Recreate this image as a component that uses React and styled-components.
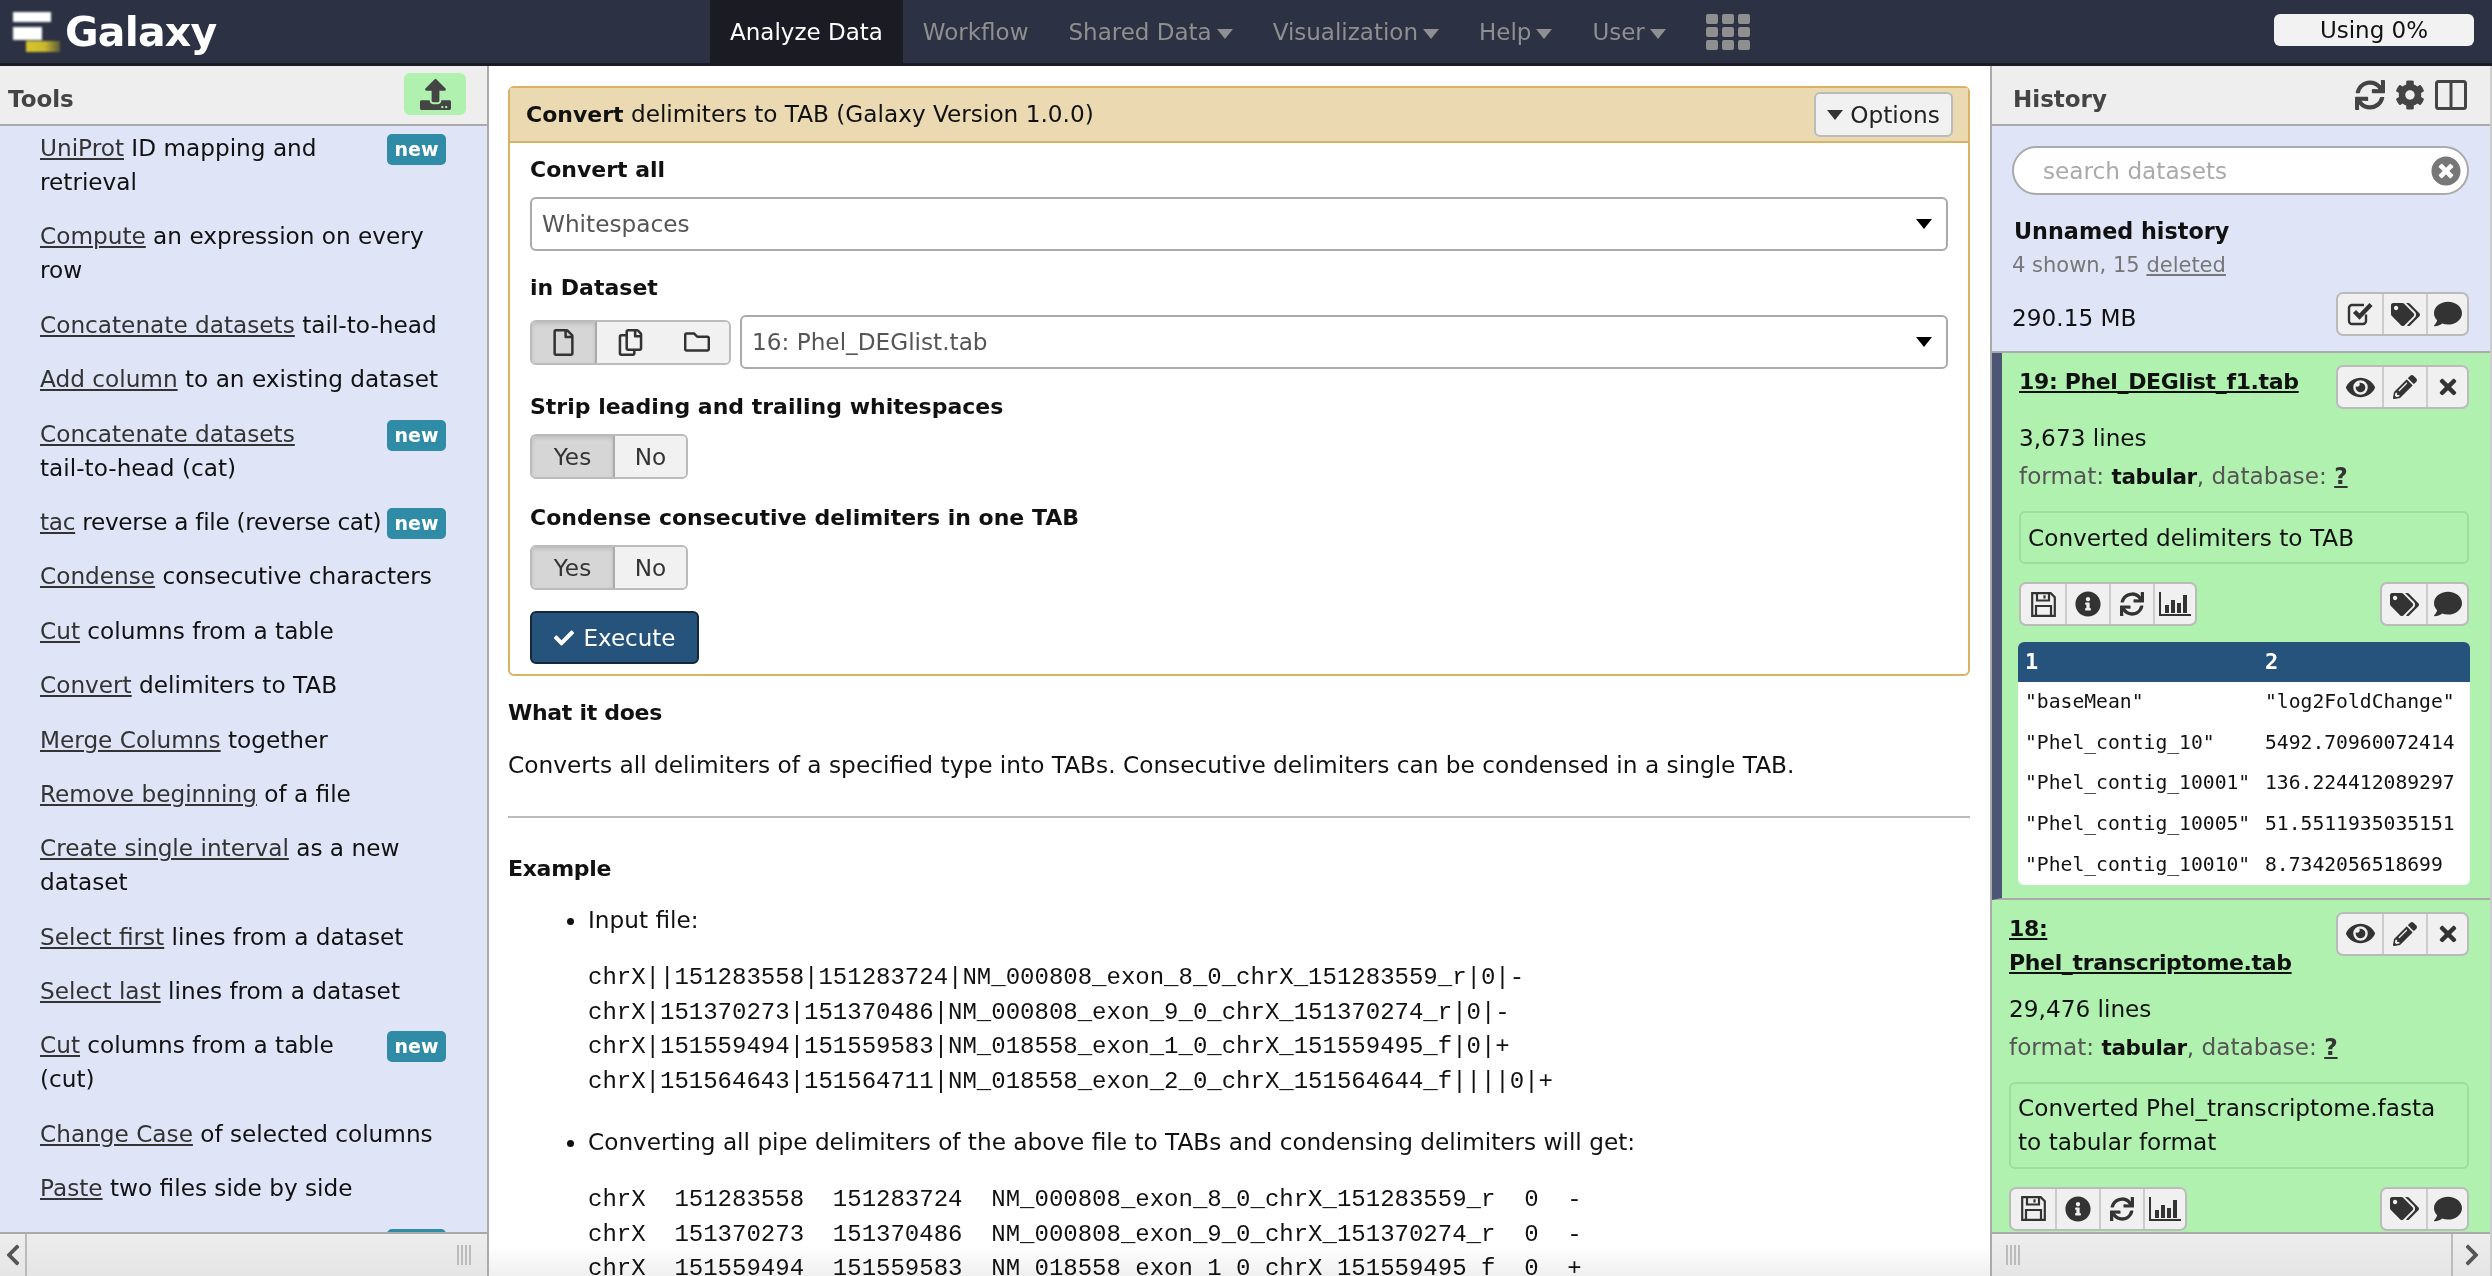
import React from "react";
import styled, { createGlobalStyle } from "styled-components";
import {
  FaSync, FaCog, FaTags, FaComment, FaEye, FaPencilAlt, FaTimes,
  FaInfoCircle, FaUpload, FaChevronLeft, FaChevronRight, FaRegFile,
  FaRegCopy, FaRegFolder, FaCheck, FaTimesCircle,
} from "react-icons/fa";

const Global = createGlobalStyle`
  html, body { margin: 0; padding: 0; height: 100%; overflow: hidden; background: #fff; }
  body { font-family: "DejaVu Sans", "Liberation Sans", sans-serif; font-size: 23.2px; line-height: 34px; color: #111; }
  * { box-sizing: border-box; }
`;

const Page = styled.div`display: grid; grid-template-rows: 66px 1fr; height: 1276px; width: 2492px; overflow: hidden;`;
const Masthead = styled.header`
  display: flex; align-items: stretch; background: #2c3143; border-bottom: 3px solid #1a1b23; height: 66px; position: relative;
`;
const Brand = styled.div`display: flex; align-items: center; gap: 5px; padding-left: 13px; width: 710px;`;
const BrandName = styled.span`font-size: 41px; font-weight: 700; color: #fff; letter-spacing: -0.8px; line-height: 60px;`;
const Nav = styled.nav`display: flex; align-items: stretch;`;
const NavItem = styled.div`
  display: flex; align-items: center; gap: 5px; height: 63px; padding: 0 20px;
  font-size: 23px; color: ${(p) => (p.$active ? "#fff" : "#8f8f8f")};
  background: ${(p) => (p.$active ? "#1a1b23" : "transparent")};
`;
const NavCaret = styled.svg`width: 16px; height: 10px; fill: #8f8f8f; margin-top: 4px;`;
const Apps = styled.svg`width: 44px; height: 36px; fill: #8f8f8f; margin: 14px 0 0 20px;`;
const Quota = styled.div`
  margin-left: auto; margin-right: 18px; margin-top: 14px; width: 200px; height: 32px; border-radius: 6px;
  background: #f2f2f2; display: flex; align-items: center; justify-content: center; font-size: 23px; color: #111;
`;

const Columns = styled.div`display: grid; grid-template-columns: 489px 1fr 502px; min-height: 0; height: 1210px;`;
const Panel = styled.aside`
  display: flex; flex-direction: column; min-height: 0; overflow: hidden; background: #dfe4f7;
`;
const LeftPanel = styled(Panel)`border-right: 2px solid #aaa;`;
const RightPanel = styled(Panel)`border-left: 2px solid #aaa; border-right: 2px solid #ccc;`;
const PanelHead = styled.div`
  flex: 0 0 60px; display: flex; align-items: center; justify-content: space-between; background: #eee;
  border-bottom: 2px solid #aaa; padding: ${(p) => p.$pad};
`;
const PanelTitle = styled.h2`margin: 0; font-size: 23px; font-weight: 700; color: #444; line-height: 34px; padding-top: 8px;`;
const UploadBtn = styled.div`
  width: 62px; height: 42px; border-radius: 6px; background: #b0f1b0; display: flex;
  align-items: center; justify-content: center; color: #444; margin-top: -2px;
`;
const ToolScroll = styled.div`flex: 1; min-height: 0; overflow: hidden;`;
const ToolList = styled(ToolScroll)`padding: 5px 41px 0 40px;`;
const Tool = styled.div`margin-bottom: 20.4px; white-space: pre-line; color: #111; letter-spacing: ${(p) => (p.$tight ? "-0.3px" : "0")};`;
const ToolLink = styled.a`color: #333; text-decoration: underline;`;
const NewBadge = styled.span`
  float: right; width: 59px; height: 31px; margin-top: 3px; border-radius: 5px; background: #2f8ba6; color: #fff;
  font-size: 19px; font-weight: 700; line-height: 30px; text-align: center; letter-spacing: 0;
`;
const PanelFoot = styled.div`
  flex: 0 0 44px; display: flex; align-items: center; justify-content: space-between;
  border-top: 2px solid #aaa; background: linear-gradient(180deg, #ededed, #e5e5e5); color: #555;
`;
const FootBtn = styled.div`
  width: ${(p) => p.$w}px; align-self: stretch; display: flex; align-items: center; justify-content: center;
  font-size: 24px; ${(p) => p.$side}: 2px solid #bbb; color: #555;
`;
const Handle = styled.div`
  width: 16px; height: 20px; margin: ${(p) => p.$m}; 
  background: repeating-linear-gradient(90deg, #bbb 0 2px, transparent 2px 4px);
`;

const Center = styled.main`position: relative; overflow: hidden; padding: 20px 20px 0 19px; background: #fff;`;
const Fade = styled.div`position: absolute; left: 0; right: 0; bottom: 0; height: 30px; mix-blend-mode: multiply; background: linear-gradient(180deg, #fff, #f0f0f0);`;
const Card = styled.section`border: 2px solid #d8b365; border-radius: 6px; background: #fff;`;
const CardHead = styled.div`
  height: 55px; display: flex; align-items: center; justify-content: space-between; background: #ebd9b2;
  border-bottom: 2px solid #d8b365; padding: 0 15px 0 16px;
`;
const CardStrong = styled.b`font-size: 22px;`;
const OptionsBtn = styled.div`
  width: 139px; height: 45px; display: flex; align-items: center; justify-content: center; gap: 7px;
  background: #f1f1f1; border: 2px solid #bbb; border-radius: 6px; color: #222;
`;
const CardBody = styled.div`padding: 10px 20px 10px;`;
const FieldLabel = styled.div`font-weight: 700; font-size: 22px; margin-bottom: 10px; color: #111;`;
const Field = styled.div`margin-bottom: ${(p) => p.$gap}px;`;
const SelectBox = styled.div`
  flex: 1; height: 54px; display: flex; align-items: center; justify-content: space-between; padding: 0 14px 0 10px;
  background: #fff; border: 2px solid #aaa; border-radius: 6px; color: #555; min-width: 0;
`;
const BlackCaret = styled.svg`width: 16px; height: 10px; fill: ${(p) => p.$fill || "#000"};`;
const DataRow = styled.div`display: flex; align-items: center; gap: 9px;`;
const Seg = styled.div`display: inline-flex; height: 45px; border: 2px solid #bbb; border-radius: 6px; overflow: hidden; background: #f1f1f1; vertical-align: top;`;
const SegItem = styled.div`
  width: ${(p) => p.$w}px; display: flex; align-items: center; justify-content: center; color: #333;
  background: ${(p) => (p.$on ? "#d6d6d6" : "#f1f1f1")};
  box-shadow: ${(p) => (p.$on ? "inset 0 2px 4px rgba(0,0,0,.12)" : "none")};
  border-right: ${(p) => (p.$on ? "2px solid #aaa" : "0")};
  & + & { border-left: ${(p) => (p.$after ? "0" : "2px solid #ccc")}; }
`;
const ExecuteBtn = styled.div`
  width: 169px; height: 53px; display: flex; align-items: center; justify-content: center; gap: 10px;
  background: #25537b; border: 2px solid #14283c; border-radius: 6px; color: #fff; font-size: 23px;
`;
const HelpTitle = styled.div`font-weight: 700; font-size: 22px; letter-spacing: -0.3px; margin: ${(p) => p.$m};`;
const HelpText = styled.p`margin: 18px 0 0; font-size: 23.25px;`;
const Rule = styled.hr`border: 0; height: 2px; background: #bbb; margin: 34px 0;`;
const Bullets = styled.ul`margin: 17px 0 0; padding: 0 0 0 80px;`;
const Bullet = styled.li`margin-bottom: 26px;`;
const Code = styled.pre`margin: 24px 0 0; font-family: "Liberation Mono", monospace; font-size: 24px; line-height: 34.5px; color: #111;`;

const SearchZone = styled.div`padding: 20px 21px 15px 20px; border-bottom: 2px solid #aaa;`;
const SearchBox = styled.div`
  height: 49px; display: flex; align-items: center; justify-content: space-between; padding: 0 6px 0 29px;
  background: #fff; border: 2px solid #aaa; border-radius: 25px; color: #aaa;
`;
const SearchClear = styled.span`display: flex; font-size: 30px; color: #777;`;
const HistoryName = styled.div`font-weight: 700; font-size: 22.3px; margin: 19px 0 0 2px; color: #111;`;
const HistoryMeta = styled.div`color: #777; font-size: 21px;`;
const MetaLink = styled.span`text-decoration: underline;`;
const SizeRow = styled.div`display: flex; justify-content: space-between; margin-top: 10px;`;
const SizeText = styled.span`padding-top: 9px; color: #111;`;
const IconGroup = styled.div`display: inline-flex; flex: none; height: 44px; border: 2px solid #bbb; border-radius: 7px; overflow: hidden; background: #f0f0f0;`;
const IconCell = styled.div`
  width: ${(p) => p.$w || 44}px; display: flex; align-items: center; justify-content: center; color: #333;
  & + & { border-left: 2px solid #ccc; }
`;
const Dataset = styled.article`
  background: #b0f1b0; padding: 12px 21px 13px 17px; border-bottom: 2px solid #aaa;
  ${(p) => (p.$strip ? "border-left: 10px solid #4d5575;" : "")}
`;
const DatasetHead = styled.div`display: flex; justify-content: space-between; gap: 12px;`;
const DatasetTitle = styled.a`font-weight: 700; font-size: 22px; letter-spacing: -0.35px; text-decoration: underline; color: #111; display: block;`;
const Lines = styled.div`margin-top: 12px; color: #111;`;
const Format = styled.div`margin-top: 4px; color: #555;`;
const FormatValue = styled.b`color: #111; font-size: 21.5px; letter-spacing: -0.4px;`;
const FormatLink = styled.span`font-weight: 700; color: #333; text-decoration: underline;`;
const Peek = styled.div`margin-top: 17px; padding: 7.5px 7px; border: 2px solid #9fdc9f; border-radius: 6px; color: #111;`;
const Actions = styled.div`display: flex; justify-content: space-between; margin-top: 18px;`;
const Preview = styled.div`margin-top: 16px; margin-left: -1px; margin-right: -1px; border-radius: 6px; overflow: hidden; background: #fff;`;
const PreviewTable = styled.table`
  border-collapse: collapse; width: 600px; table-layout: fixed; font-family: "DejaVu Sans Mono", monospace; font-size: 19.7px; color: #111;
`;
const Th = styled.th`background: #25537b; color: #fff; height: 40px; padding: 0 0 0 7px; text-align: left; font-size: 22px; font-weight: 700; width: ${(p) => p.$w}px;`;
const Td = styled.td`height: 40.6px; line-height: 40px; padding: 0 0 0 7px; white-space: nowrap; overflow: hidden;`;
const IconRowWrap = styled.div`display: flex; align-items: center; gap: 10px; color: #444; font-size: 30px;`;

const Caret = ({ as: C = BlackCaret, ...p }) => (
  <C viewBox="0 0 16 10" {...p}><path d="M0 0h16L8 10z" /></C>
);

const ColumnsIcon = () => (
  <svg width="32" height="30" viewBox="0 0 32 30" fill="none" stroke="#444" strokeWidth="3">
    <rect x="1.5" y="1.5" width="29" height="27" rx="2" /><path d="M16 1.5v27" />
  </svg>
);
const BarIcon = () => (
  <svg width="32" height="24" viewBox="0 0 32 24" fill="#333">
    <path d="M0 0h2v22h30v2H0z" /><rect x="6" y="13" width="4" height="8" /><rect x="12" y="8" width="4" height="13" />
    <rect x="18" y="11" width="4" height="10" /><rect x="24" y="3" width="4" height="18" />
  </svg>
);
const SaveIcon = () => (
  <svg width="25" height="25" viewBox="0 0 25 25" fill="none" stroke="#333" strokeWidth="2.2">
    <path d="M1.2 1.2h18.5l4.1 4.1v18.5H1.2z" />
    <path d="M6 1.2v7.3h12V1.2" /><path d="M13.5 3.2v3.4" />
    <path d="M5 23.8V14h15v9.8" />
  </svg>
);
const CheckSquareIcon = () => (
  <svg width="27" height="26" viewBox="0 0 27 26" fill="none" stroke="#333">
    <path d="M19 13.5V20a3 3 0 0 1-3 3H5a3 3 0 0 1-3-3V7a3 3 0 0 1 3-3h12" strokeWidth="2.4" />
    <path d="M7.5 10.5l5 5L24 3.5" strokeWidth="4.4" />
  </svg>
);
const Logo = () => (
  <svg width="47" height="40" viewBox="0 0 47 40" style={{ filter: "blur(.8px)", marginTop: "1px" }}>
    <defs>
      <linearGradient id="logoFade" x1="0" x2="1" y1="0" y2="0">
        <stop offset="0" stopColor="#d8c52c" /><stop offset=".55" stopColor="#c9b82e" /><stop offset="1" stopColor="#5d5c3e" />
      </linearGradient>
    </defs>
    <rect x="0" y="0" width="38" height="10" fill="#fff" />
    <rect x="0" y="15" width="29" height="13" fill="#fff" />
    <rect x="13" y="29" width="34" height="11" fill="url(#logoFade)" />
  </svg>
);
const AppsIcon = () => (
  <Apps viewBox="0 0 44 36">
    {[0, 13, 26].map((y) => [0, 16, 32].map((x) => <rect key={`${x}-${y}`} x={x} y={y} width="12" height="10" rx="2" />))}
  </Apps>
);

const tools = [
  ["UniProt", " ID mapping and\nretrieval", 1],
  ["Compute", " an expression on every\nrow"],
  ["Concatenate datasets", " tail-to-head"],
  ["Add column", " to an existing dataset"],
  ["Concatenate datasets", "\ntail-to-head (cat)", 1],
  ["tac", " reverse a file (reverse cat)", 1, 1],
  ["Condense", " consecutive characters"],
  ["Cut", " columns from a table"],
  ["Convert", " delimiters to TAB"],
  ["Merge Columns", " together"],
  ["Remove beginning", " of a file"],
  ["Create single interval", " as a new\ndataset"],
  ["Select first", " lines from a dataset"],
  ["Select last", " lines from a dataset"],
  ["Cut", " columns from a table\n(cut)", 1],
  ["Change Case", " of selected columns"],
  ["Paste", " two files side by side"],
  ["Select last", " lines from", 1],
];

const inputPre = `chrX||151283558|151283724|NM_000808_exon_8_0_chrX_151283559_r|0|-
chrX|151370273|151370486|NM_000808_exon_9_0_chrX_151370274_r|0|-
chrX|151559494|151559583|NM_018558_exon_1_0_chrX_151559495_f|0|+
chrX|151564643|151564711|NM_018558_exon_2_0_chrX_151564644_f||||0|+`;
const outputPre = `chrX  151283558  151283724  NM_000808_exon_8_0_chrX_151283559_r  0  -
chrX  151370273  151370486  NM_000808_exon_9_0_chrX_151370274_r  0  -
chrX  151559494  151559583  NM_018558_exon_1_0_chrX_151559495_f  0  +`;

const rows = [
  ['"baseMean"', '"log2FoldChange"', '"lfcSE"'],
  ['"Phel_contig_10"', "5492.70960072414", "0.1"],
  ['"Phel_contig_10001"', "136.224412089297", "0.2"],
  ['"Phel_contig_10005"', "51.5511935035151", "0.3"],
  ['"Phel_contig_10010"', "8.7342056518699", "0.4"],
];

const EditButtons = () => (
  <IconGroup>
    <IconCell $w={44}><FaEye size={29} /></IconCell>
    <IconCell $w={44}><FaPencilAlt size={24} /></IconCell>
    <IconCell $w={41}><FaTimes size={24} /></IconCell>
  </IconGroup>
);
const DatasetActions = () => (
  <Actions>
    <IconGroup>
      <IconCell><SaveIcon /></IconCell>
      <IconCell><FaInfoCircle size={26} /></IconCell>
      <IconCell><FaSync size={24} /></IconCell>
      <IconCell $w={42}><BarIcon /></IconCell>
    </IconGroup>
    <IconGroup>
      <IconCell><FaTags size={29} /></IconCell>
      <IconCell $w={41}><FaComment size={28} /></IconCell>
    </IconGroup>
  </Actions>
);
const IconRow = () => (
  <IconRowWrap><FaSync /><FaCog /><ColumnsIcon /></IconRowWrap>
);

export default function App() {
  return (
    <Page>
      <Global />
      <Masthead>
        <Brand><Logo /><BrandName>Galaxy</BrandName></Brand>
        <Nav>
          <NavItem $active>Analyze Data</NavItem>
          <NavItem>Workflow</NavItem>
          <NavItem>Shared Data<Caret as={NavCaret} /></NavItem>
          <NavItem>Visualization<Caret as={NavCaret} /></NavItem>
          <NavItem>Help<Caret as={NavCaret} /></NavItem>
          <NavItem>User<Caret as={NavCaret} /></NavItem>
          <AppsIcon />
        </Nav>
        <Quota>Using 0%</Quota>
      </Masthead>
      <Columns>
        <LeftPanel>
          <PanelHead $pad="0 21px 0 8px">
            <PanelTitle>Tools</PanelTitle>
            <UploadBtn><FaUpload size={31} /></UploadBtn>
          </PanelHead>
          <ToolList>
            {tools.map(([link, rest, badge, tight], i) => (
              <Tool key={i} $tight={tight}>
                {badge && <NewBadge>new</NewBadge>}
                <ToolLink>{link}</ToolLink>{rest}
              </Tool>
            ))}
          </ToolList>
          <PanelFoot>
            <FootBtn $w={27} $side="border-right"><FaChevronLeft /></FootBtn>
            <Handle $m="0 14px 0 0" />
          </PanelFoot>
        </LeftPanel>

        <Center>
          <Card>
            <CardHead>
              <span><CardStrong>Convert</CardStrong> delimiters to TAB (Galaxy Version 1.0.0)</span>
              <OptionsBtn><Caret $fill="#333" />Options</OptionsBtn>
            </CardHead>
            <CardBody>
              <Field $gap={20}>
                <FieldLabel>Convert all</FieldLabel>
                <SelectBox>Whitespaces<Caret /></SelectBox>
              </Field>
              <Field $gap={21}>
                <FieldLabel>in Dataset</FieldLabel>
                <DataRow>
                  <Seg>
                    <SegItem $w={65} $on><FaRegFile size={27} /></SegItem>
                    <SegItem $w={67} $after><FaRegCopy size={27} /></SegItem>
                    <SegItem $w={65}><FaRegFolder size={26} /></SegItem>
                  </Seg>
                  <SelectBox>16: Phel_DEGlist.tab<Caret /></SelectBox>
                </DataRow>
              </Field>
              <Field $gap={22}>
                <FieldLabel>Strip leading and trailing whitespaces</FieldLabel>
                <Seg><SegItem $w={83} $on>Yes</SegItem><SegItem $w={71} $after>No</SegItem></Seg>
              </Field>
              <Field $gap={21}>
                <FieldLabel>Condense consecutive delimiters in one TAB</FieldLabel>
                <Seg><SegItem $w={83} $on>Yes</SegItem><SegItem $w={71} $after>No</SegItem></Seg>
              </Field>
              <ExecuteBtn><FaCheck size={20} />Execute</ExecuteBtn>
            </CardBody>
          </Card>
          <HelpTitle $m="20px 0 0">What it does</HelpTitle>
          <HelpText>Converts all delimiters of a specified type into TABs. Consecutive delimiters can be condensed in a single TAB.</HelpText>
          <Rule />
          <HelpTitle $m="0">Example</HelpTitle>
          <Bullets>
            <Bullet>Input file:<Code>{inputPre}</Code></Bullet>
            <Bullet>Converting all pipe delimiters of the above file to TABs and condensing delimiters will get:<Code>{outputPre}</Code></Bullet>
          </Bullets>
          <Fade />
        </Center>

        <RightPanel>
          <PanelHead $pad="0 23px 0 21px">
            <PanelTitle>History</PanelTitle>
            <IconRow />
          </PanelHead>
          <ToolScroll>
            <SearchZone>
              <SearchBox>search datasets<SearchClear><FaTimesCircle /></SearchClear></SearchBox>
              <HistoryName>Unnamed history</HistoryName>
              <HistoryMeta>4 shown, 15 <MetaLink>deleted</MetaLink></HistoryMeta>
              <SizeRow>
                <SizeText>290.15 MB</SizeText>
                <IconGroup>
                  <IconCell><CheckSquareIcon /></IconCell>
                  <IconCell><FaTags size={29} /></IconCell>
                  <IconCell $w={41}><FaComment size={28} /></IconCell>
                </IconGroup>
              </SizeRow>
            </SearchZone>
            <Dataset $strip>
              <DatasetHead>
                <DatasetTitle>19: Phel_DEGlist_f1.tab</DatasetTitle>
                <EditButtons />
              </DatasetHead>
              <Lines>3,673 lines</Lines>
              <Format>format: <FormatValue>tabular</FormatValue>, database: <FormatLink>?</FormatLink></Format>
              <Peek>Converted delimiters to TAB</Peek>
              <DatasetActions />
              <Preview>
                <PreviewTable>
                  <thead><tr><Th $w={240}>1</Th><Th $w={204}>2</Th><Th>3</Th></tr></thead>
                  <tbody>{rows.map((r, i) => <tr key={i}>{r.map((c, j) => <Td key={j}>{c}</Td>)}</tr>)}</tbody>
                </PreviewTable>
              </Preview>
            </Dataset>
            <Dataset>
              <DatasetHead>
                <DatasetTitle>18:<br />Phel_transcriptome.tab</DatasetTitle>
                <EditButtons />
              </DatasetHead>
              <Lines>29,476 lines</Lines>
              <Format>format: <FormatValue>tabular</FormatValue>, database: <FormatLink>?</FormatLink></Format>
              <Peek>Converted Phel_transcriptome.fasta<br />to tabular format</Peek>
              <DatasetActions />
            </Dataset>
          </ToolScroll>
          <PanelFoot>
            <Handle $m="0 0 0 14px" />
            <FootBtn $w={39} $side="border-left"><FaChevronRight /></FootBtn>
          </PanelFoot>
        </RightPanel>
      </Columns>
    </Page>
  );
}
